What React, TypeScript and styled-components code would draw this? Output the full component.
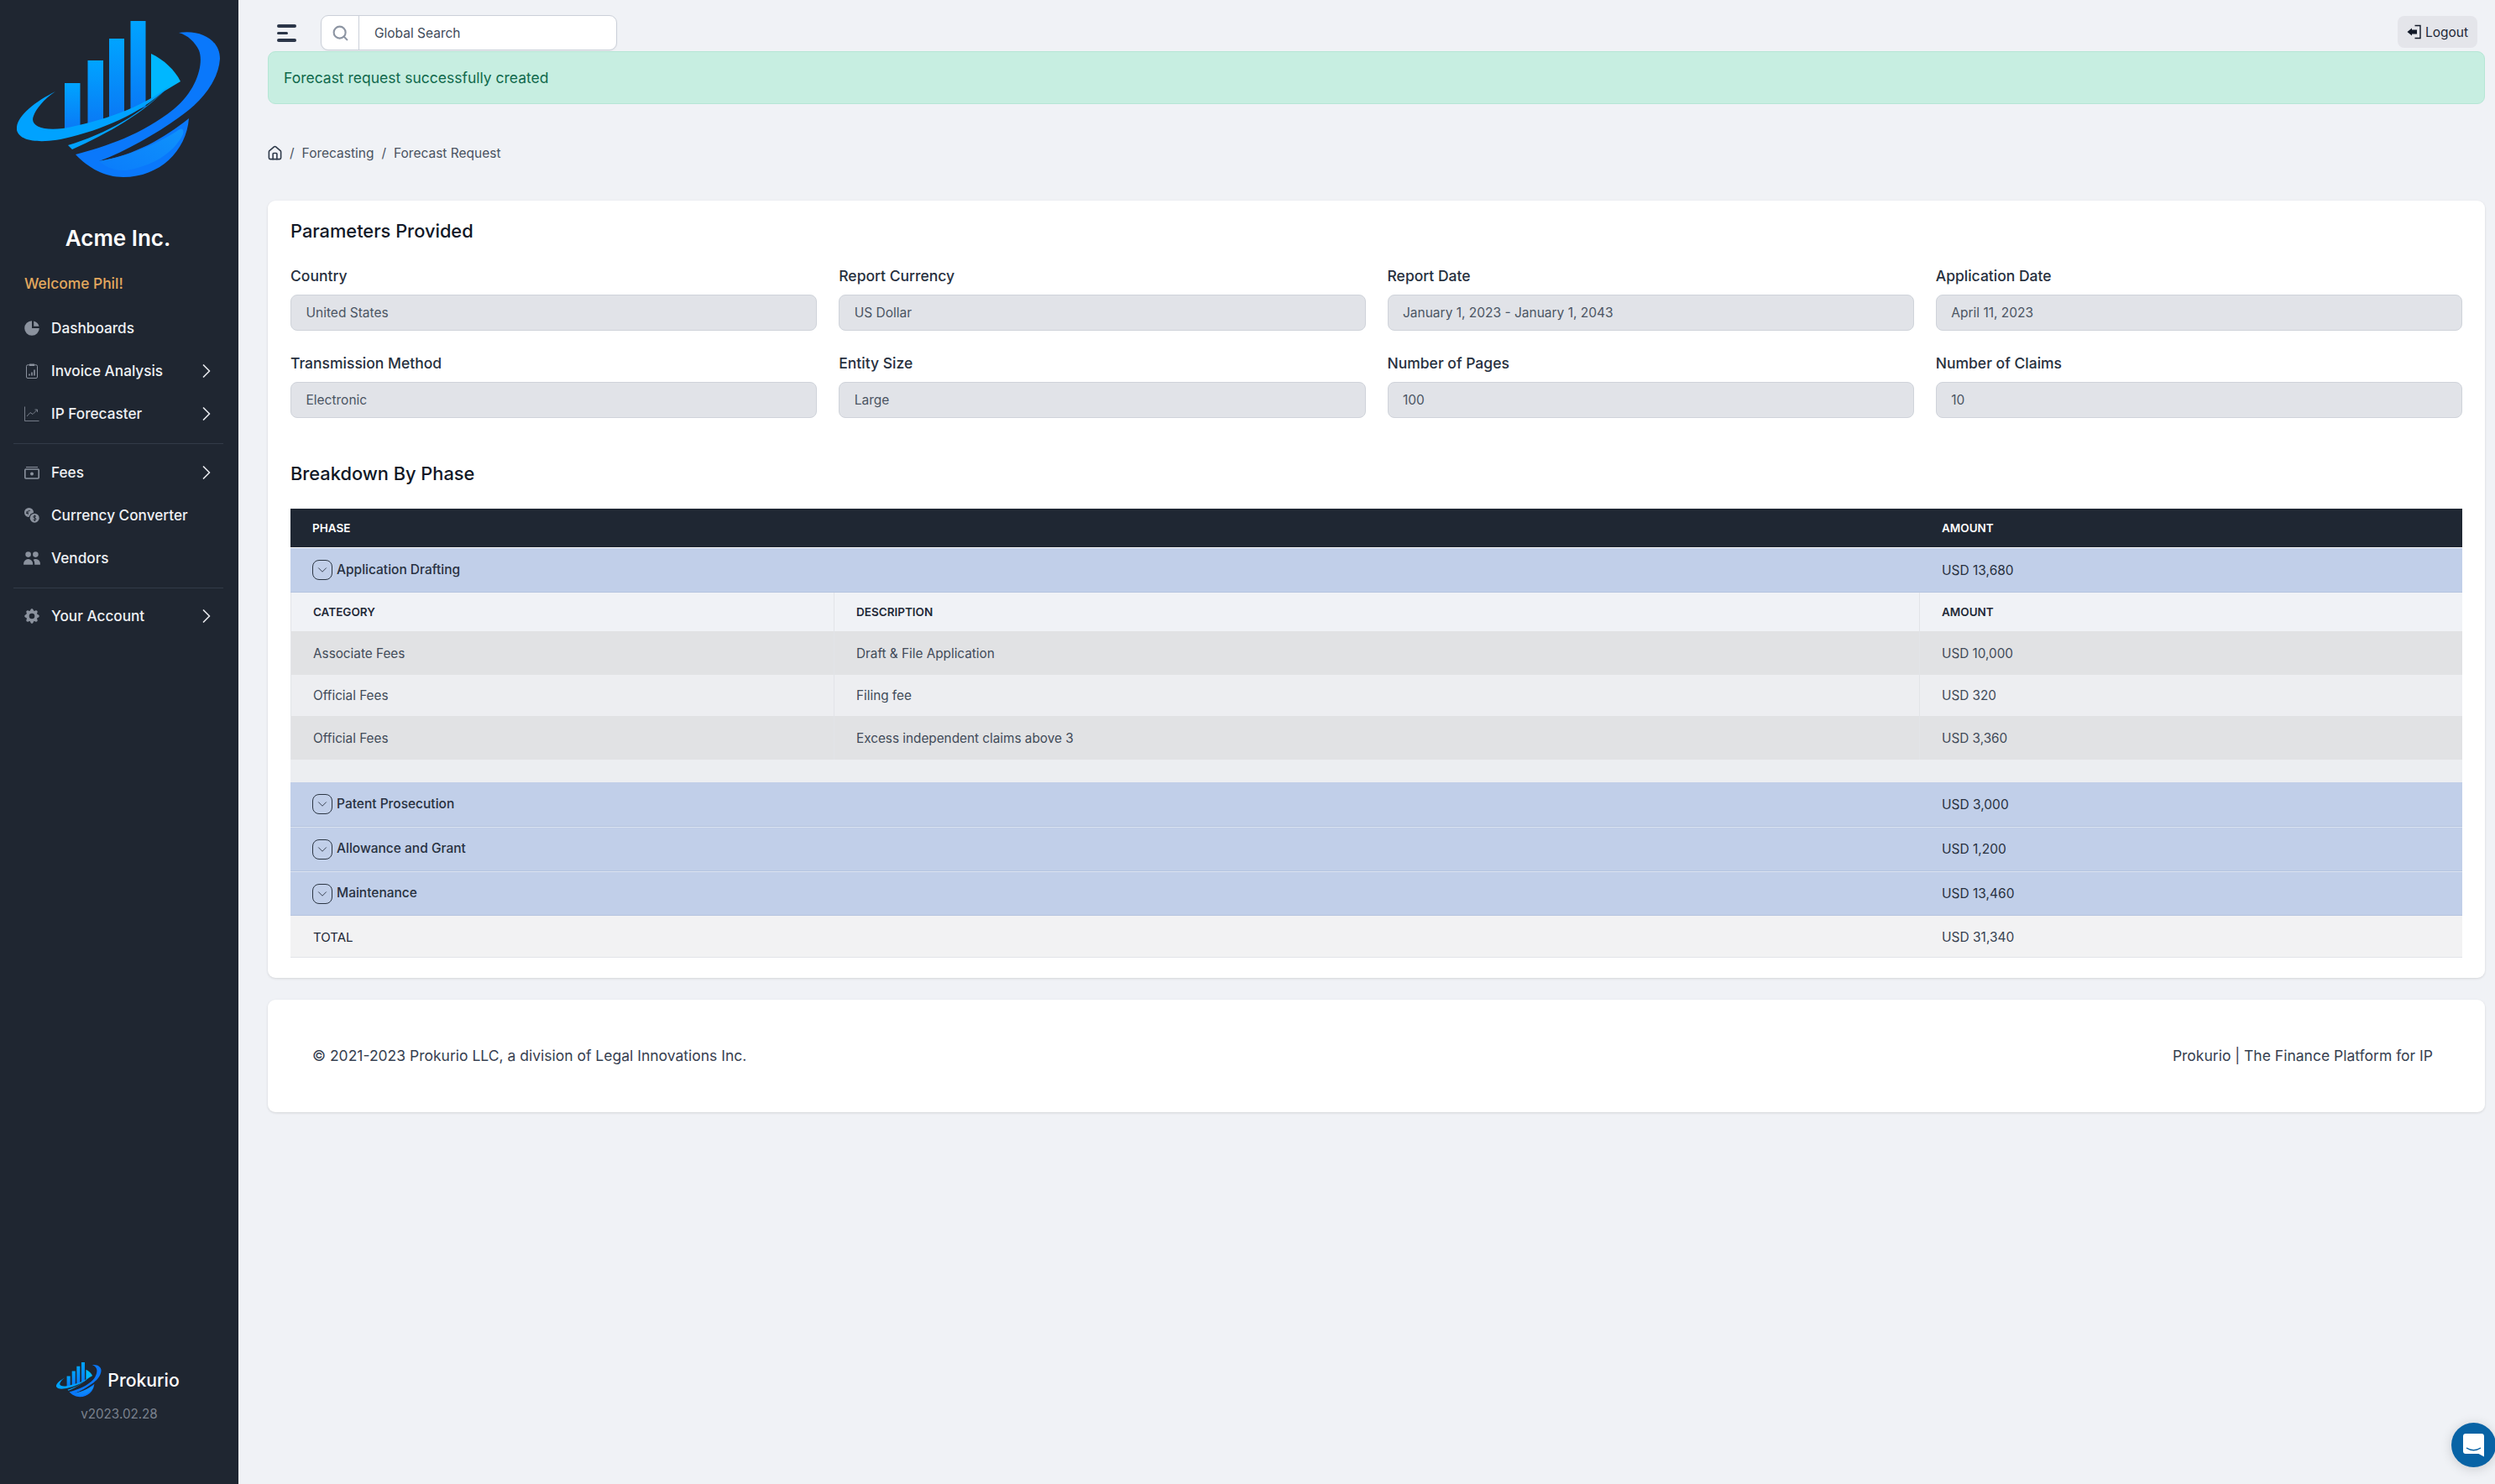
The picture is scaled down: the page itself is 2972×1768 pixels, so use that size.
import React from "react";
import styled, { createGlobalStyle } from "styled-components";
import { ChevronRight, ChevronDown, Search, House } from "lucide-react";
import { HiChartPie, HiCog, HiUsers } from "react-icons/hi";

const Global = createGlobalStyle`
  html, body { margin: 0; padding: 0; background: #f0f2f6; }
  body { font-family: Inter, "Liberation Sans", sans-serif; color: #1f2937; }
  * { box-sizing: border-box; }
`;

const Shell = styled.div`
  display: flex;
  width: 2972px;
  height: 1768px;
  overflow: hidden;
  position: relative;
`;
const Side = styled.aside`
  width: 284px;
  flex: none;
  background: #1f2631;
  display: flex;
  flex-direction: column;
  color: #fff;
`;
const LogoWrap = styled.div`
  padding: 25px 0 0 20px;
  height: 212px;
  svg { display: block; }
`;
const Company = styled.div`
  margin-top: 52px;
  text-align: center;
  font-size: 26px;
  line-height: 40px;
  font-weight: 600;
  padding-right: 3px;
`;
const Welcome = styled.div`
  margin: 20px 0 0 29px;
  font-size: 17.4px;
  line-height: 28px;
  font-weight: 500;
  color: #e3a85e;
`;
const Nav = styled.nav`
  margin-top: 13px;
  display: flex;
  flex-direction: column;
`;
const NavRow = styled.div`
  height: 51px;
  display: flex;
  align-items: center;
  padding: 0 24px 0 29px;
  gap: 14px;
  font-size: 17.2px;
  font-weight: 500;
  color: #eef0f3;
  svg.main { width: 18px; height: 18px; flex: none; color: #8b929e; }
  svg.hero { width: 22px; height: 22px; margin: 0 -2px; flex: none; color: #8b929e; }
  span { flex: 1; white-space: nowrap; }
  svg.chev { width: 28px; height: 28px; color: #e5e7eb; flex: none; }
`;
const NavDivider = styled.div<{ $after: number }>`
  height: 1px;
  background: #323b48;
  margin: 10px 18px ${(p) => p.$after}px 16px;
`;
const SideFoot = styled.div`
  margin-top: auto;
  padding-bottom: 73px;
  display: flex;
  flex-direction: column;
  align-items: center;
`;
const Brand = styled.div`
  display: flex;
  align-items: center;
  gap: 7px;
  font-size: 21.2px;
  font-weight: 500;
  color: #fff;
  height: 44px;
  padding-right: 3px;
`;
const Version = styled.div`
  margin-top: 9px;
  font-size: 15.2px;
  line-height: 20px;
  color: #7b828e;
`;
const Main = styled.main`
  flex: 1;
  min-width: 0;
  padding: 0 12px 0 35px;
  display: flex;
  flex-direction: column;
`;
const Topbar = styled.div`
  height: 61px;
  display: flex;
  align-items: flex-start;
  padding: 18px 0 0 11px;
`;
const Hamburger = styled.div`
  width: 23px;
  display: flex;
  flex-direction: column;
  gap: 5.2px;
  margin: 11px 29px 0 0;
  i { display: block; height: 3.5px; border-radius: 2px; background: #2b3648; }
  i:nth-child(2) { width: 13px; }
`;
const SearchBox = styled.div`
  width: 353px;
  height: 42px;
  background: #fff;
  border: 1px solid #cbd0d9;
  border-radius: 9px;
  display: flex;
  align-items: center;
  box-shadow: 0 1px 2px rgba(0,0,0,.05);
`;
const SearchIcon = styled.div`
  width: 45px;
  height: 100%;
  border-right: 1px solid #cbd0d9;
  display: flex;
  align-items: center;
  justify-content: center;
  color: #8d95a3;
`;
const SearchText = styled.div`
  padding-left: 18px;
  font-size: 15.5px;
  color: #414b5a;
`;
const LogoutBtn = styled.div`
  margin: 1px 9px 0 auto;
  width: 95px;
  height: 38px;
  background: #e4e5ea;
  border-radius: 8px;
  display: flex;
  align-items: center;
  justify-content: center;
  gap: 4px;
  font-size: 15.5px;
  color: #1f2937;
`;
const Alert = styled.div`
  height: 63px;
  background: #c7eee1;
  border: 1px solid #b5e6d5;
  border-radius: 9px;
  display: flex;
  align-items: center;
  padding-left: 18px;
  font-size: 17.5px;
  color: #10694c;
`;
const Crumbs = styled.div`
  margin-top: 48px;
  height: 20px;
  display: flex;
  align-items: center;
  font-size: 15.5px;
  color: #4a5361;
  gap: 9px;
  padding-left: 1px;
  svg { width: 19px; height: 19px; margin: 0 -1px 0 -2px; color: #2f3a4a; }
`;
const Card = styled.section`
  margin-top: 47px;
  height: 926px;
  background: #fff;
  border-radius: 9px;
  box-shadow: 0 1px 3px rgba(0,0,0,.12);
  padding: 0 27px;
`;
const CardTitle = styled.h2`
  margin: 0;
  padding-top: 21px;
  font-size: 21.8px;
  line-height: 30px;
  font-weight: 500;
  color: #111827;
`;
const FieldGrid = styled.div`
  margin-top: 27px;
  display: grid;
  grid-template-columns: repeat(4, 1fr);
  column-gap: 26px;
  row-gap: 27px;
`;
const FieldLabel = styled.div`
  font-size: 17.5px;
  line-height: 24px;
  font-weight: 500;
  color: #27303e;
`;
const FieldValue = styled.div`
  margin-top: 10px;
  height: 43px;
  background: #e1e3e8;
  border: 1px solid #cfd3da;
  border-radius: 8px;
  display: flex;
  align-items: center;
  padding-left: 17.5px;
  font-size: 15.5px;
  color: #4b5563;
`;
const SecondTitle = styled(CardTitle)`
  padding-top: 0;
  margin-top: 51px;
`;
const Table = styled.div`
  margin-top: 27px;
  font-size: 15.3px;
  color: #374151;
`;
const amountCol = "620px";
const HeadRow = styled.div`
  height: 47px;
  background: #1f2733;
  border-bottom: 1px solid #fff;
  display: grid;
  grid-template-columns: 1fr ${amountCol};
  align-items: center;
  padding-left: 26px;
  color: #fff;
  font-size: 13.5px;
  font-weight: 600;
`;
const PhaseRow = styled.div`
  height: 53px;
  background: #c1cfe9;
  border-bottom: 1px solid #b5c4df;
  display: grid;
  grid-template-columns: 1fr ${amountCol};
  align-items: center;
  padding-left: 26px;
  color: #283140;
  font-size: 15.5px;
  & + & { border-top: 1px solid #dbe3f1; }
`;
const PhaseName = styled.div`
  display: flex;
  align-items: center;
  gap: 5px;
  font-weight: 500;
  margin-top: -2px;
`;
const Toggle = styled.div`
  width: 24px;
  height: 24px;
  border: 1px solid #2c3644;
  border-radius: 8px;
  display: flex;
  align-items: center;
  justify-content: center;
  margin-top: 2px;
  svg { width: 18px; height: 18px; color: #2c3644; }
`;
const SubRow = styled.div<{ $tone: string; $h: number }>`
  height: ${(p) => p.$h}px;
  background: ${(p) => p.$tone};
  display: grid;
  grid-template-columns: 647px 1293px 1fr;
  align-items: center;
  border-left: 1px solid #e2e4e8;
`;
const SubCell = styled.div<{ $strong?: boolean }>`
  height: 100%;
  display: flex;
  align-items: center;
  padding-left: 26px;
  border-right: 1px solid #e2e4e8;
  font-weight: ${(p) => (p.$strong ? 600 : 400)};
  font-size: ${(p) => (p.$strong ? "13.5px" : "15.3px")};
  color: ${(p) => (p.$strong ? "#1f2937" : "#414b59")};
  &:last-child { border-right: none; }
`;
const Spacer = styled.div`
  height: 27px;
  background: #eceef1;
`;
const TotalRow = styled.div`
  height: 50px;
  background: #f2f2f3;
  border-bottom: 1px solid #e2e4e8;
  display: grid;
  grid-template-columns: 1fr ${amountCol};
  align-items: center;
  padding: 1px 0 0 26px;
  font-size: 15.5px;
  color: #374151;
`;
const TotalLabel = styled.div`
  font-size: 15px;
  color: #1f2937;
  padding-left: 1px;
`;
const FootCard = styled.footer`
  margin-top: 26px;
  height: 134px;
  background: #fff;
  border-radius: 9px;
  box-shadow: 0 1px 3px rgba(0,0,0,.12);
  display: flex;
  align-items: center;
  justify-content: space-between;
  padding: 0 62px 2px 53px;
  font-size: 17.5px;
  color: #374151;
`;
const Chat = styled.div`
  position: absolute;
  left: 2920px;
  top: 1695px;
  width: 53px;
  height: 53px;
  border-radius: 50%;
  background: #0863a5;
  box-shadow: 0 2px 14px rgba(0,0,0,.16);
  display: flex;
  align-items: center;
  justify-content: center;
  padding-right: 1px;
`;

const Logo = ({ width, prefix }: { width: number; prefix: string }) => (
  <svg width={width} height={(width * 190) / 244} viewBox="20 25 244 190" fill="none">
    <defs>
      <linearGradient id={`${prefix}bar`} x1="0" y1="0" x2="0" y2="1">
        <stop offset="0" stopColor="#00a4ff" />
        <stop offset="1" stopColor="#0a78f5" />
      </linearGradient>
      <linearGradient id={`${prefix}lit`} x1="0" y1="1" x2="1" y2="0">
        <stop offset="0" stopColor="#0a7cfb" />
        <stop offset="1" stopColor="#0f93fb" />
      </linearGradient>
    </defs>
    <path d="M77 99H95.500V153L77 155Z" fill={`url(#${prefix}bar)`} />
    <path d="M104.500 72H123V146L104.500 150Z" fill={`url(#${prefix}bar)`} />
    <path d="M130 46H148V138L130 143Z" fill={`url(#${prefix}bar)`} />
    <path d="M155.500 25H173.500V127L155.500 134Z" fill={`url(#${prefix}bar)`} />
    <path d="M180 64C195 71 208 83 215 97L180 118Z" fill="#00b7ff" />
    <path d="M66 109C40 122 18 140 20 155C24 172 60 170 85 163C130 152 175 130 202 102C170 128 120 145 75 153C50 156 35 150 40 138C43 130 52 118 66 109Z" fill="#00a2ff" />
    <path d="M202 102C170 136 130 158 86 178L81 173C125 160 170 135 202 102Z" fill="#00a2ff" />
    <path d="M213 39C240 35 262 48 262 70C260 100 235 125 213 140C185 160 150 180 118 192C160 185 195 165 225 141C222 180 190 211 147 211C125 211 105 200 90 184C125 175 170 160 207 130C235 107 243 75 237 60C232 50 224 42 213 39Z" fill="#0a78fb" />
    <path d="M118 192C155 186 190 170 214 154C218 152 219 156 218 160C206 184 180 198 150 203C135 204 125 198 118 192Z" fill={`url(#${prefix}lit)`} />
  </svg>
);

const IconClip = () => (
  <svg className="main" viewBox="0 0 18 18" fill="none" stroke="currentColor" strokeWidth="1">
    <rect x="2.500" y="1.800" width="13" height="15.700" rx="1.500" />
    <rect x="6" y="0.500" width="6" height="2.500" fill="currentColor" stroke="none" />
    <path d="M6 14.500v-2M9 14.500v-4M12 14.500v-7" strokeWidth="1.600" />
  </svg>
);
const IconChart = () => (
  <svg className="main" viewBox="0 0 18 18" fill="none" stroke="currentColor" strokeWidth="0.800">
    <path d="M0.500 0.500V17.500H17.500" />
    <path d="M3 12L7 7.500L10 9.500L15.500 4M12.500 4H15.500V7" />
  </svg>
);
const IconCash = () => (
  <svg className="main" viewBox="0 0 18 18" fill="none" stroke="currentColor">
    <path d="M2 2.500H16" strokeWidth="1" />
    <rect x="0.800" y="5" width="16.400" height="11" rx="1" strokeWidth="1.600" />
    <circle cx="9" cy="10.500" r="2" fill="currentColor" stroke="none" />
  </svg>
);
const IconCoins = () => (
  <svg className="main" viewBox="0 0 18 18">
    <circle cx="5.500" cy="5.500" r="5.500" fill="currentColor" />
    <circle cx="12" cy="12" r="6.300" fill="#1f2631" />
    <circle cx="12.200" cy="12.200" r="5.500" fill="currentColor" />
    <path d="M14 10.300C13 9.300 10.800 9.500 10.800 10.900C10.800 12.500 14 11.700 14 13.400C14 14.800 11.600 15 10.500 14M12.300 8.500V16" stroke="#1f2631" strokeWidth="1" fill="none" />
    <path d="M7 3.500C5 2.800 3.300 4 3.300 5.700C3.300 7 4 7.800 5 8M2 5H5.500M2 6.500H5" stroke="#1f2631" strokeWidth="0.900" fill="none" />
  </svg>
);

const phases = [
  ["Patent Prosecution", "USD 3,000"],
  ["Allowance and Grant", "USD 1,200"],
  ["Maintenance", "USD 13,460"],
];
const fields = [
  ["Country", "United States"],
  ["Report Currency", "US Dollar"],
  ["Report Date", "January 1, 2023 - January 1, 2043"],
  ["Application Date", "April 11, 2023"],
  ["Transmission Method", "Electronic"],
  ["Entity Size", "Large"],
  ["Number of Pages", "100"],
  ["Number of Claims", "10"],
];
const details = [
  ["Associate Fees", "Draft & File Application", "USD 10,000", "#e1e2e4", 52],
  ["Official Fees", "Filing fee", "USD 320", "#edeef1", 49],
  ["Official Fees", "Excess independent claims above 3", "USD 3,360", "#e1e2e4", 52],
] as const;

const Chev = () => <ChevronRight className="chev" strokeWidth={1.5} />;
const Tog = () => (
  <Toggle><ChevronDown strokeWidth={1.2} /></Toggle>
);

export default function App() {
  return (
    <Shell>
      <Global />
      <Side>
        <LogoWrap><Logo width={244} prefix="a" /></LogoWrap>
        <Company>Acme Inc.</Company>
        <Welcome>Welcome Phil!</Welcome>
        <Nav>
          <NavRow><HiChartPie className="hero" /><span>Dashboards</span></NavRow>
          <NavRow><IconClip /><span>Invoice Analysis</span><Chev /></NavRow>
          <NavRow><IconChart /><span>IP Forecaster</span><Chev /></NavRow>
          <NavDivider $after={8} />
          <NavRow><IconCash /><span>Fees</span><Chev /></NavRow>
          <NavRow><IconCoins /><span>Currency Converter</span></NavRow>
          <NavRow><HiUsers className="hero" /><span>Vendors</span></NavRow>
          <NavDivider $after={7} />
          <NavRow><HiCog className="hero" /><span>Your Account</span><Chev /></NavRow>
        </Nav>
        <SideFoot>
          <Brand><Logo width={54} prefix="b" />Prokurio</Brand>
          <Version>v2023.02.28</Version>
        </SideFoot>
      </Side>
      <Main>
        <Topbar>
          <Hamburger><i /><i /><i /></Hamburger>
          <SearchBox>
            <SearchIcon><Search size={21} strokeWidth={2.4} /></SearchIcon>
            <SearchText>Global Search</SearchText>
          </SearchBox>
          <LogoutBtn>
            <svg width="18" height="18" viewBox="0 0 18 18" fill="none">
              <path d="M0.500 9L6 4.500V6.500H12V11.500H6V13.500Z" fill="#111827" />
              <path d="M9.500 1.500H16V16.500H9.500" stroke="#111827" strokeWidth="1.400" />
            </svg>
            Logout
          </LogoutBtn>
        </Topbar>
        <Alert>Forecast request successfully created</Alert>
        <Crumbs>
          <House strokeWidth={2} />
          <span>/</span>
          <span>Forecasting</span>
          <span>/</span>
          <span>Forecast Request</span>
        </Crumbs>
        <Card>
          <CardTitle>Parameters Provided</CardTitle>
          <FieldGrid>
            {fields.map(([l, v]) => (
              <div key={l}>
                <FieldLabel>{l}</FieldLabel>
                <FieldValue>{v}</FieldValue>
              </div>
            ))}
          </FieldGrid>
          <SecondTitle>Breakdown By Phase</SecondTitle>
          <Table>
            <HeadRow><div>PHASE</div><div>AMOUNT</div></HeadRow>
            <PhaseRow>
              <PhaseName><Tog />Application Drafting</PhaseName>
              <div>USD 13,680</div>
            </PhaseRow>
            <SubRow $tone="#f0f2f6" $h={46}>
              <SubCell $strong>CATEGORY</SubCell>
              <SubCell $strong>DESCRIPTION</SubCell>
              <SubCell $strong>AMOUNT</SubCell>
            </SubRow>
            {details.map(([c, d, a, tone, h], i) => (
              <SubRow key={i} $tone={tone} $h={h}>
                <SubCell>{c}</SubCell>
                <SubCell>{d}</SubCell>
                <SubCell>{a}</SubCell>
              </SubRow>
            ))}
            <Spacer />
            {phases.map(([n, a]) => (
              <PhaseRow key={n}>
                <PhaseName><Tog />{n}</PhaseName>
                <div>{a}</div>
              </PhaseRow>
            ))}
            <TotalRow><TotalLabel>TOTAL</TotalLabel><div>USD 31,340</div></TotalRow>
          </Table>
        </Card>
        <FootCard>
          <div>© 2021-2023 Prokurio LLC, a division of Legal Innovations Inc.</div>
          <div>Prokurio | The Finance Platform for IP</div>
        </FootCard>
      </Main>
      <Chat>
        <svg width="25" height="28" viewBox="0 0 25 28">
          <path d="M3 0H22C23.700 0 25 1.300 25 3V27.500L18.500 24H3C1.300 24 0 22.700 0 21V3C0 1.300 1.300 0 3 0Z" fill="#fff" />
          <path d="M4 17C9 20.500 16 20.500 21 17" stroke="#0863a5" strokeWidth="1.500" fill="none" />
        </svg>
      </Chat>
    </Shell>
  );
}
